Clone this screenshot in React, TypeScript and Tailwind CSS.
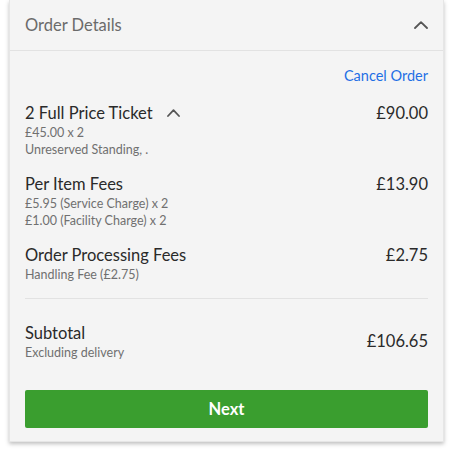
const Chevron = ({ w, h, className }: { w: number; h: number; className?: string }) => (
  <svg width={w} height={h} viewBox={`0 0 ${w} ${h}`} className={className} fill="none">
    <polyline
      points={`1,${h - 1} ${w / 2},1.2 ${w - 1},${h - 1}`}
      stroke="#555"
      strokeWidth={1.8}
      strokeLinecap="round"
      strokeLinejoin="round"
    />
  </svg>
);

const Row = ({
  title,
  price,
  lines,
  chevron,
}: {
  title: string;
  price: string;
  lines: string[];
  chevron?: boolean;
}) => (
  <div className="flex justify-between items-start">
    <div>
      <div className="flex items-center gap-[14px] text-[16.5px] leading-[22px] text-[#2a2a2a]">
        <span>{title}</span>
        {chevron && <Chevron w={13} h={8} />}
      </div>
      {lines.map((l) => (
        <div key={l} className="text-[12.5px] leading-[17px] text-[#707070]">
          {l}
        </div>
      ))}
    </div>
    <span className="text-[16.5px] leading-[22px] text-[#2a2a2a]">{price}</span>
  </div>
);

export default function App() {
  return (
    <div className="bg-white w-[457px] h-[453px] font-['Lato',sans-serif]">
      <div className="ml-[9px] w-[435px] bg-[#f4f4f4] border-x border-b border-[#e6e6e6] shadow-[0_2px_4px_rgba(0,0,0,0.25)]">
        <div className="flex items-center justify-between h-[51px] px-[15px] border-b border-[#e2e2e2]">
          <span className="text-[16.5px] text-[#6b6b6b]">Order Details</span>
          <Chevron w={14} h={8} />
        </div>
        <div className="px-[15px] pt-[15px] pb-[13px]">
          <div className="flex justify-end text-[14.5px] leading-[20px] text-[#1f6fe5]">Cancel Order</div>
          <div className="mt-[16px] flex flex-col gap-[15px]">
            <Row
              title="2 Full Price Ticket"
              price="£90.00"
              chevron
              lines={["£45.00 x 2", "Unreserved Standing, ."]}
            />
            <Row
              title="Per Item Fees"
              price="£13.90"
              lines={["£5.95 (Service Charge) x 2", "£1.00 (Facility Charge) x 2"]}
            />
            <Row title="Order Processing Fees" price="£2.75" lines={["Handling Fee (£2.75)"]} />
          </div>
          <div className="mt-[15px] border-t border-[#e2e2e2]" />
          <div className="mt-[23px] flex justify-between items-center">
            <div>
              <div className="text-[16.5px] leading-[22px] text-[#2a2a2a]">Subtotal</div>
              <div className="text-[12.5px] leading-[17px] text-[#707070]">Excluding delivery</div>
            </div>
            <span className="text-[16.5px] text-[#2a2a2a]">£106.65</span>
          </div>
          <button className="mt-[29px] w-full h-[38px] rounded-[2px] bg-[#3a9e2f] text-white font-bold text-[16.5px]">
            Next
          </button>
        </div>
      </div>
    </div>
  );
}
